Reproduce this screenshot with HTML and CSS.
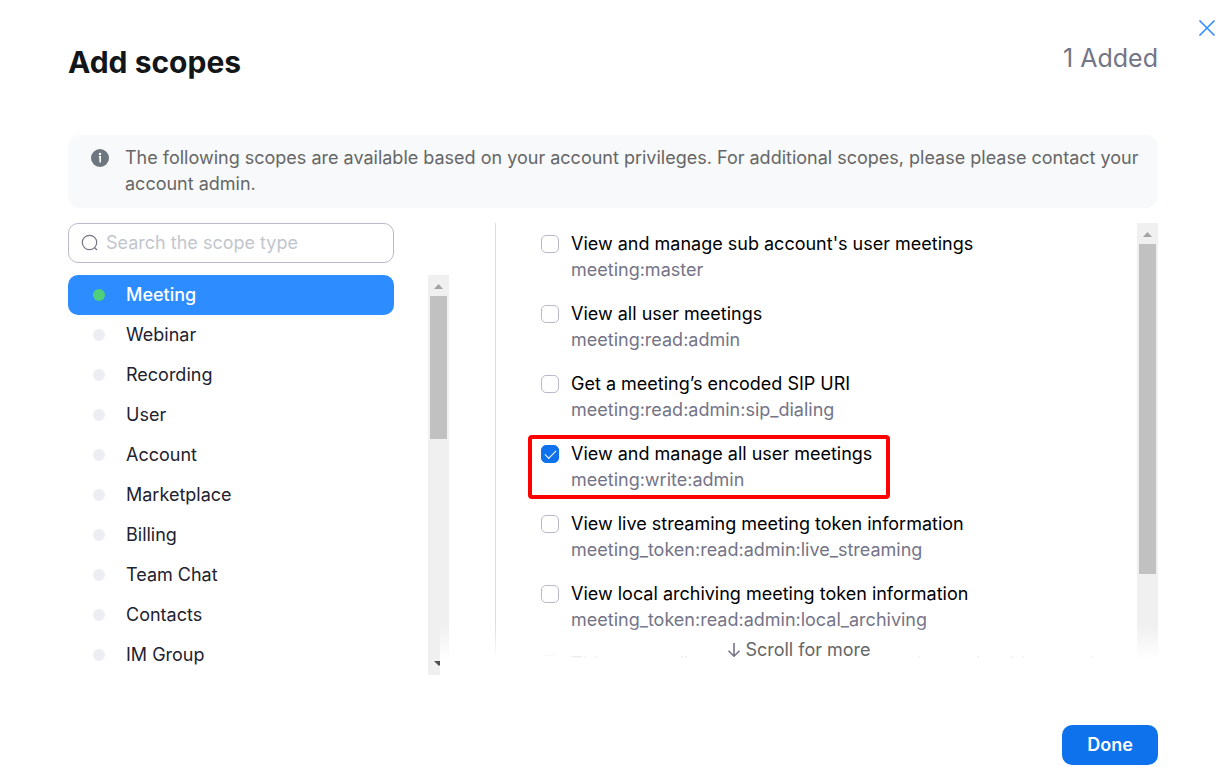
FILE: index.html
```html
<!DOCTYPE html>
<html lang="en">
<head>
    <meta charset="UTF-8">
    <meta name="viewport" content="width=device-width, initial-scale=1.0">
    <title>Add scopes</title>
    <link rel="stylesheet" href="styles.css">
</head>
<body>
    <main class="dialog">
        <button type="button" class="close-btn" aria-label="Close">
            <svg width="18" height="18" viewBox="0 0 18 18" fill="none" stroke="#2d8cff" stroke-width="1.6"><path d="M1.5 1.5l15 15M16.5 1.5l-15 15"/></svg>
        </button>

        <header class="dialog-header">
            <h1 class="title">Add scopes</h1>
            <span class="added">1 Added</span>
        </header>

        <div class="notice">
            <svg class="notice-icon" width="18" height="18" viewBox="0 0 18 18"><circle cx="9" cy="9" r="9" fill="#6e7680"/><circle cx="9" cy="5" r="1.2" fill="#fff"/><path d="M7.8 7.8H9.2V13.6" fill="none" stroke="#fff" stroke-width="1.6"/></svg>
            <p class="notice-text">The following scopes are available based on your account privileges. For additional scopes, please please contact your account admin.</p>
        </div>

        <div class="columns">
            <div class="sidebar">
                <div class="search">
                    <svg width="18" height="18" viewBox="0 0 18 18" fill="none" stroke="#747487" stroke-width="1.2"><circle cx="8.5" cy="8.5" r="7.2"/><path d="M13.3 13.3l2.7 2.7"/></svg>
                    <input type="text" class="search-input" placeholder="Search the scope type" aria-label="Search the scope type">
                </div>
                <div class="types">
                    <nav class="type-list">
                        <a href="#" class="type active">Meeting</a>
                        <a href="#" class="type">Webinar</a>
                        <a href="#" class="type">Recording</a>
                        <a href="#" class="type">User</a>
                        <a href="#" class="type">Account</a>
                        <a href="#" class="type">Marketplace</a>
                        <a href="#" class="type">Billing</a>
                        <a href="#" class="type">Team Chat</a>
                        <a href="#" class="type">Contacts</a>
                        <a href="#" class="type">IM Group</a>
                    </nav>
                    <div class="scrollbar" aria-hidden="true">
                        <svg class="arrow" width="21" height="21" viewBox="0 0 21 21"><path d="M6 14h9l-4.5-5z" fill="#a3a3a3"/></svg>
                        <div class="thumb thumb-types"></div>
                        <svg class="arrow arrow-down" width="21" height="21" viewBox="0 0 21 21"><path d="M6 7h10l-5 5z" fill="#505050"/></svg>
                    </div>
                </div>
            </div>

            <div class="panel">
                <div class="scope-list">
                    <label class="scope">
                        <input type="checkbox" class="check">
                        <span class="scope-name">View and manage sub account's user meetings</span>
                        <span class="scope-code">meeting:master</span>
                    </label>
                    <label class="scope">
                        <input type="checkbox" class="check">
                        <span class="scope-name">View all user meetings</span>
                        <span class="scope-code">meeting:read:admin</span>
                    </label>
                    <label class="scope">
                        <input type="checkbox" class="check">
                        <span class="scope-name">Get a meeting’s encoded SIP URI</span>
                        <span class="scope-code">meeting:read:admin:sip_dialing</span>
                    </label>
                    <label class="scope marked">
                        <input type="checkbox" class="check" checked>
                        <span class="scope-name">View and manage all user meetings</span>
                        <span class="scope-code">meeting:write:admin</span>
                    </label>
                    <label class="scope">
                        <input type="checkbox" class="check">
                        <span class="scope-name">View live streaming meeting token information</span>
                        <span class="scope-code">meeting_token:read:admin:live_streaming</span>
                    </label>
                    <label class="scope">
                        <input type="checkbox" class="check">
                        <span class="scope-name">View local archiving meeting token information</span>
                        <span class="scope-code">meeting_token:read:admin:local_archiving</span>
                    </label>
                    <label class="scope">
                        <input type="checkbox" class="check">
                        <span class="scope-name">This scope allows users to manage meeting and webinar settings</span>
                    </label>
                </div>
                <div class="scrollbar" aria-hidden="true">
                    <svg class="arrow" width="21" height="21" viewBox="0 0 21 21"><path d="M6 14h9l-4.5-5z" fill="#a3a3a3"/></svg>
                    <div class="thumb thumb-scopes"></div>
                </div>
                <div class="fade">
                    <svg width="14" height="16" viewBox="0 0 14 16" fill="none" stroke="#747487" stroke-width="1.6"><path d="M7 1v13M1.5 8.7L7 14.2l5.5-5.5"/></svg>
                    <span>Scroll for more</span>
                </div>
            </div>
        </div>

        <footer class="dialog-footer">
            <button type="button" class="done-btn">Done</button>
        </footer>
    </main>
</body>
</html>
```
FILE: styles.css
```css
* {
    box-sizing: border-box;
}

body {
    margin: 0;
    background-color: #fff;
    font-family: Inter, "Liberation Sans", sans-serif;
    font-size: 18px;
    line-height: 26px;
    color: #131619;
}

.dialog {
    position: relative;
    padding: 40px 60px 14px 68px;
}

.close-btn {
    position: absolute;
    top: 18px;
    right: 1px;
    padding: 0;
    width: 20px;
    height: 20px;
    border: none;
    background: none;
    cursor: pointer;
    display: flex;
    align-items: center;
    justify-content: center;
}

.dialog-header {
    display: flex;
    justify-content: space-between;
    align-items: flex-start;
    margin-bottom: 51px;
}

.title {
    margin: 0;
    font-size: 30px;
    font-weight: 700;
    line-height: 44px;
}

.added {
    font-size: 25px;
    line-height: 36px;
    color: #747487;
}

/* Notice */

.notice {
    display: flex;
    gap: 16px;
    padding: 10px 12px 11px 23px;
    border-radius: 12px;
    background-color: #f7f9fa;
    color: #666;
}

.notice-icon {
    flex: none;
    margin-top: 4px;
}

.notice-text {
    margin: 0;
}

/* Scope types */

.columns {
    display: flex;
    margin-top: 15px;
    height: 452px;
}

.sidebar {
    flex: none;
    width: 381px;
}

.search {
    display: flex;
    align-items: center;
    gap: 7px;
    width: 326px;
    height: 40px;
    padding: 0 12px;
    border: 1px solid #babacc;
    border-radius: 10px;
}

.search-input {
    flex: 1;
    min-width: 0;
    padding: 0;
    border: none;
    outline: none;
    background: none;
    font: inherit;
}

.search-input::placeholder {
    color: #c1c6ce;
    opacity: 1;
}

.types {
    display: flex;
    justify-content: space-between;
    margin-top: 12px;
    height: 400px;
}

.type-list {
    width: 326px;
}

.type {
    display: flex;
    align-items: center;
    gap: 21px;
    height: 40px;
    padding-left: 25px;
    border-radius: 10px;
    color: #222230;
    text-decoration: none;
}

.type::before {
    content: "";
    width: 12px;
    height: 12px;
    border-radius: 50%;
    background-color: #ededf4;
}

.type.active {
    background-color: #2d8cff;
    color: #fff;
    font-weight: 500;
}

.type.active::before {
    background-color: #4fcf7c;
}

.scrollbar {
    display: flex;
    flex-direction: column;
    flex: none;
    width: 21px;
    background-color: #f0f0f0;
}

.arrow {
    flex: none;
}

.arrow-down {
    margin-top: auto;
}

.thumb {
    margin: 0 2px;
    background-color: #c1c1c1;
}

.thumb-types {
    height: 143px;
}

.thumb-scopes {
    height: 330px;
}

/* Scopes */

.panel {
    position: relative;
    display: flex;
    flex: 1;
    min-width: 0;
    margin-left: 46px;
    border-left: 1px solid #dcdcec;
}

.scope-list {
    flex: 1;
    min-width: 0;
    height: 435px;
    overflow: hidden;
    padding: 4px 0 0 34px;
}

.scope {
    display: grid;
    grid-template-columns: 18px 1fr;
    grid-auto-rows: 26px;
    column-gap: 12px;
    width: 358px;
    height: 60px;
    margin-bottom: 10px;
    padding: 4px 0 0 11px;
    white-space: nowrap;
}

.marked {
    outline: 4px solid #f00;
    outline-offset: -2px;
    border-radius: 2px;
}

.check {
    appearance: none;
    margin: 4px 0 0;
    width: 18px;
    height: 18px;
    border: 1px solid #babacc;
    border-radius: 5px;
    background-color: #fff;
}

.check:checked {
    border-color: #0e72ed;
    background-color: #0e72ed;
}

.check:checked::before {
    content: "";
    display: block;
    width: 10px;
    height: 5px;
    margin: 4px 0 0 3px;
    border-left: 1px solid #fff;
    border-bottom: 1px solid #fff;
    transform: rotate(-45deg);
}

.scope-name {
    color: #000;
}

.scope-code {
    grid-column: 2;
    color: #747487;
}

.fade {
    position: absolute;
    left: -56px;
    right: 0;
    bottom: 0;
    display: flex;
    justify-content: center;
    gap: 4px;
    height: 50px;
    padding-top: 12px;
    background: linear-gradient(rgba(255, 255, 255, 0), #fff 34px);
    color: #666;
}

.fade svg {
    margin-top: 5px;
}

/* Footer */

.dialog-footer {
    display: flex;
    justify-content: flex-end;
    margin-top: 50px;
}

.done-btn {
    width: 96px;
    height: 40px;
    border: none;
    border-radius: 10px;
    background-color: #0e72ed;
    color: #fff;
    font: inherit;
    font-weight: 600;
    cursor: pointer;
}
```
